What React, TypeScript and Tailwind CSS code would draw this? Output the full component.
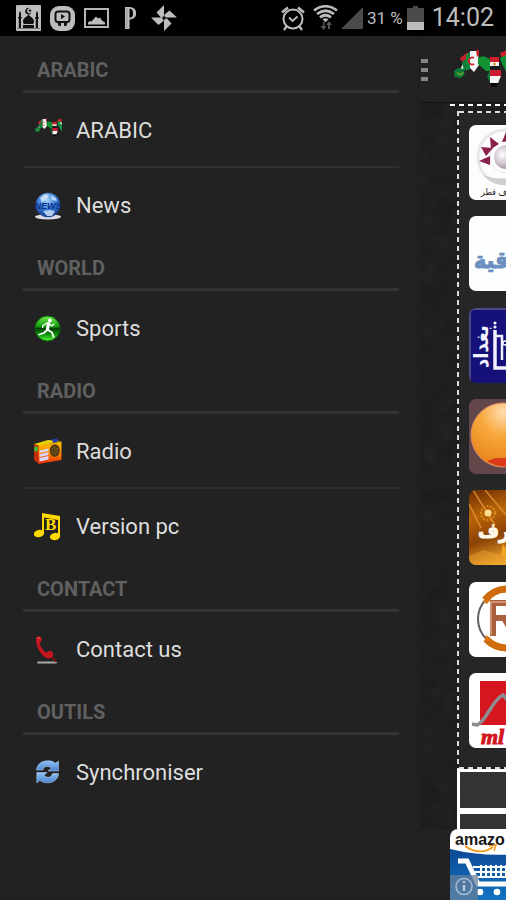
import type { ReactNode } from 'react';

/* ---------- status bar icons ---------- */
const MosqueIcon = () => (
  <svg width="25" height="26" viewBox="0 0 25 26">
    <rect width="25" height="26" rx="1" fill="#bdbdbd" />
    <g fill="#111">
      <path d="M12.5 9c.5 2.500 5.500 3.500 5.500 7.500 0 1.200-.5 2-1 2.500h-9c-.5-.5-1-1.300-1-2.500C7 12.500 12 11.500 12.500 9z" />
      <path d="M3 8l1-2 1 2v4h.700v1.500H5V23H2.800v-9.500H2V12h1zM20 8l1-2 1 2v4h.8v1.500H22V23h-2.200v-9.500H19V12h1z" />
      <path d="M7 20h11v3H7z" />
      <path d="M14 3.200a3.300 3.300 0 1 0 1.600 4.200 2.600 2.600 0 1 1-1.600-4.200z" />
      <path d="M14 4l.6 1 1.100.1-.8.8.2 1.100-1.100-.5-1 .5.200-1.100-.8-.8 1.200-.1z" />
    </g>
    <path d="M1 23.500h23" stroke="#777" />
  </svg>
);

const VideoIcon = () => (
  <svg width="25" height="25" viewBox="0 0 25 25">
    <rect width="25" height="25" rx="9" fill="#bdbdbd" />
    <rect x="5.500" y="5.500" width="14" height="10.500" rx="2.500" fill="none" stroke="#111" strokeWidth="2" />
    <path d="M11 8l4 2.600-4 2.600zM7.500 16h3.500v4h-2.500zM14 16h3.500l-1 4H14z" fill="#111" />
  </svg>
);

const PictureIcon = () => (
  <svg width="25" height="20" viewBox="0 0 25 20">
    <rect x="1" y="1" width="23" height="18" fill="none" stroke="#b5b5b5" strokeWidth="2" />
    <path d="M4 16.500v-2l2-1.500 1.500.5L12 8.500l2 2 2-1 2 3 3 2v2z" fill="#bdbdbd" />
  </svg>
);

const LetterPIcon = () => (
  <svg width="11" height="22" viewBox="0 0 11 22">
    <path
      d="M0 0h5a6 6 0 0 1 0 12.500H4.500V22H0zM4.500 1.700v9C7.300 10.700 8 9 8 6.200S7 1.700 4.500 1.700z"
      fillRule="evenodd"
      fill="#bdbdbd"
    />
    <path d="M1.800 1.500v20" stroke="#808080" strokeWidth=".7" />
  </svg>
);

const PinwheelIcon = () => (
  <svg width="26" height="26" viewBox="0 0 26 26" fill="#bdbdbd">
    <path d="M13 0v12.500H10L5.500 7.500zM26 12.500H13.500V9.500l5-4zM13 26V13.500h3l4.500 5zM0 12.500h12.500v3.500l-5 4z" />
    <circle cx="13" cy="13" r="1.800" fill="#111" />
  </svg>
);

const AlarmIcon = () => (
  <svg width="24" height="26" viewBox="0 0 24 26" fill="none" stroke="#bdbdbd">
    <circle cx="12" cy="14" r="9.500" strokeWidth="2" />
    <path d="M1 7.500L7 2.500M23 7.500l-6-5" strokeWidth="2.500" />
    <path d="M8 12.500l3.500 3.500 5-4.500" strokeWidth="1.800" />
    <path d="M5.500 21.500L3 25M18.500 21.500L21 25" strokeWidth="2.200" />
  </svg>
);

const WifiIcon = () => (
  <svg width="25" height="26" viewBox="0 0 25 26" fill="none" stroke="#bdbdbd">
    <path d="M1 5.500c7-5.700 16-5.700 23 0M4 9c5.500-4.200 11.500-4.200 17 0M7 12.300c3.500-2.600 7.500-2.600 11 0" strokeWidth="2.700" />
    <path d="M9.500 14.300c2-1.300 4-1.300 6 0l-3 3z" fill="#bdbdbd" stroke="none" />
    <path d="M10 17v4H7.500L10.500 25l3-4H11.500v-4zM15 24v-4h-2l3-4 3 4h-2v4z" fill="#555" stroke="none" />
  </svg>
);

const SignalIcon = () => (
  <svg width="22" height="22" viewBox="0 0 22 22">
    <path d="M22 0v22H0z" fill="#4b4b4b" />
  </svg>
);

const BatteryIcon = () => (
  <svg width="17" height="24" viewBox="0 0 17 24">
    <path d="M0 2h6V0h5v2h6v22H0z" fill="#4b4b4b" />
    <path d="M0 16h17v8H0z" fill="#bdbdbd" />
  </svg>
);

/* ---------- drawer icons ---------- */
const ArabMap = ({ className, box = '0 0 64 44' }: { className: string; box?: string }) => (
  <svg className={className} viewBox={box}>
    <path d="M1 27l6-9 3-7 6-7-1 8-4 3-2 7z" fill="#e9e9e9" />
    <path d="M6 8l8-6v7l-6 3z" fill="#c8202c" />
    <path d="M0 21l4-3 6 1 .5 6-4 3-6-1z" fill="#0c7a35" />
    <path d="M3.500 22.500c1 2.500 4.500 2.500 5.500 0" stroke="#e6c830" fill="none" />
    <path d="M8 12l6-5v11l-4 3z" fill="#0c7a35" />
    <path d="M12 5l5-4v17l-5 3z" fill="#0c8a3c" />
    <path d="M16 1h8l1 14-5 7-4-4z" fill="#f5f5f5" />
    <path d="M20 8a3.500 3.500 0 1 0 0 6" stroke="#d0202c" strokeWidth="1.600" fill="none" />
    <path d="M22 0h3v5l-2 2z" fill="#c8202c" />
    <path d="M24 8l5-2 7 3 0 12-4 0-8-7z" fill="#129233" />
    <path d="M36 7h9v5h-9z" fill="#d0202c" />
    <path d="M36 12h9v4h-9z" fill="#f3f3f3" />
    <path d="M36 16h9v3h-9z" fill="#181818" />
    <circle cx="40.500" cy="14" r="1.500" fill="#d0a030" />
    <path d="M36 20h11v6H36z" fill="#cf1b31" />
    <path d="M36 26h11l-3 7h-8z" fill="#f5f5f5" />
    <path d="M33 27l3-7v12z" fill="#0c7a35" />
    <path d="M36 33h8l-1 4h-5z" fill="#050505" />
    <path d="M46 3l7-3 4 6-8 5z" fill="#d0202c" />
    <path d="M46 8l6-3 8 7v19l-6-6-6-11z" fill="#0f8f38" />
    <path d="M52 8l5 2 0 2-5-1z" fill="#eee" />
  </svg>
);

const NewsIcon = () => (
  <svg className="size-7" viewBox="0 0 28 28">
    <defs>
      <radialGradient id="globe" cx=".45" cy=".3" r=".8">
        <stop offset="0" stopColor="#a9d4ff" />
        <stop offset=".5" stopColor="#2f76cf" />
        <stop offset="1" stopColor="#0c2b78" />
      </radialGradient>
    </defs>
    <ellipse cx="14" cy="24.800" rx="13" ry="2.700" fill="#d9dce6" />
    <circle cx="14" cy="13" r="12.200" fill="url(#globe)" />
    <path d="M6 6l5-4 4 1-2 4-5 3zM17 3l5 3 1 3-5-1zM9 19l7-1 5 1-3 5-5 0z" fill="#d6e9fb" opacity=".8" />
    <text x="14" y="16.500" textAnchor="middle" fontFamily="Liberation Sans, sans-serif" fontWeight="700" fontStyle="italic" fontSize="9" fill="#10318a">
      NEWS
    </text>
  </svg>
);

const SportsIcon = () => (
  <svg className="size-7" viewBox="0 0 28 28">
    <defs>
      <linearGradient id="turf" x1="0" y1="0" x2="0" y2="1">
        <stop offset="0" stopColor="#72ee4a" />
        <stop offset=".42" stopColor="#149a12" />
        <stop offset=".5" stopColor="#023f02" />
        <stop offset=".72" stopColor="#0b8a08" />
        <stop offset="1" stopColor="#58ff3a" />
      </linearGradient>
    </defs>
    <circle cx="13.500" cy="13.500" r="12.500" fill="url(#turf)" stroke="#0a6a0a" />
    <g stroke="#fff" fill="none" strokeLinecap="round" strokeLinejoin="round">
      <path d="M14.500 8.500l-1 6" strokeWidth="3.200" />
      <path d="M14 15l4 2.500 1.500 4.500M13 15l-3 3-5 1.500" strokeWidth="1.800" />
      <path d="M13 8l-4 2.500-.5 2M15.500 9l2.500 2 2-2" strokeWidth="1.200" />
    </g>
    <circle cx="16" cy="5.500" r="1.900" fill="#fff" />
  </svg>
);

const RadioIcon = () => (
  <svg className="size-7" viewBox="0 0 28 28">
    <defs>
      <linearGradient id="radioBody" x1="0" y1="0" x2="0" y2="1">
        <stop offset="0" stopColor="#ffc400" />
        <stop offset=".5" stopColor="#ff8a00" />
        <stop offset="1" stopColor="#e62a05" />
      </linearGradient>
    </defs>
    <path d="M0 6l14-4 13 1-22 5z" fill="#e5d000" />
    <path d="M0 6l5 2v18L0 22z" fill="#c62b08" />
    <path d="M4.500 7.500L27.500 3.500V22L4.500 26z" fill="url(#radioBody)" />
    <path d="M18 1.500l5-1 1 3-5 1.500z" fill="#233fb8" />
    <path d="M5.500 12.500l9-2v2.600l-9 2zM5.500 16.300l9-2v2.600l-9 2zM5.500 20l9-2v3.500l-9 2z" fill="#d9d4ff" />
    <ellipse cx="20.800" cy="12.500" rx="5" ry="6.300" fill="#4f3a12" />
    <path d="M17.500 10l6 4M17 13l5 3.500M19 8l5.500 4" stroke="#9a7428" strokeWidth=".8" />
    <ellipse cx="2" cy="11" rx="1.800" ry="2.800" fill="#28c840" />
  </svg>
);

const MusicIcon = () => (
  <svg className="size-7" viewBox="0 0 28 28" fill="#ffd800">
    <path d="M8 0l18 3v20h-2V7L10 4.500V20H8z" />
    <ellipse cx="5" cy="20.500" rx="5.200" ry="3.700" transform="rotate(-12 5 20.500)" />
    <ellipse cx="21" cy="23.500" rx="5.200" ry="3.700" transform="rotate(-12 21 23.500)" />
    <text x="11" y="17" fontFamily="Liberation Serif, serif" fontWeight="700" fontSize="17">
      B
    </text>
  </svg>
);

const PhoneIcon = () => (
  <svg className="size-7" viewBox="0 0 28 28">
    <path d="M4 26.500h18" stroke="#a9a9a9" strokeWidth="1.800" strokeLinecap="round" />
    <path d="M18 21l4 5" stroke="#8e0b12" strokeWidth="1.500" />
    <path
      d="M2.500 1.500C4-.5 7 0 7.500 2.500c.5 2-.5 4-2 5C6.500 11 9 14.500 12.500 17c1-2 3.500-2.500 5-1.500 2.500 1.500 2 5-.5 6.500-2.500 1.200-6 0-9-3.500C4 14 .8 6 2.500 1.500z"
      fill="#c51620"
    />
    <path d="M3.500 3c.5-1.500 2-1.500 2.700 0" stroke="#f06a6a" fill="none" />
  </svg>
);

const SyncIcon = () => (
  <svg className="size-7" viewBox="0 0 28 28">
    <defs>
      <linearGradient id="sync" x1="0" y1="0" x2="0" y2="1">
        <stop offset="0" stopColor="#8fc0f5" />
        <stop offset="1" stopColor="#4b82cc" />
      </linearGradient>
    </defs>
    <g fill="url(#sync)" stroke="#b7d6fa" strokeWidth=".5">
      <path d="M2.500 11C3 4.500 9 1.300 15 1.800c3 .2 5 1.200 6.500 2.500L24.500 2v10H14l3.500-3C14 6.500 9.500 7 9 11z" />
      <path d="M24.500 14.500c0 6-6 9.800-12 9.300-3-.3-5-1-6.500-2.500L2.800 24V13.500H13l-3 3c3.500 3 7.500 2 8.500-2z" />
    </g>
  </svg>
);

/* ---------- drawer ---------- */
type Entry = { label: string; icon: ReactNode };
const groups: { title: string; items: Entry[] }[] = [
  {
    title: 'ARABIC',
    items: [
      { label: 'ARABIC', icon: <ArabMap className="h-7 w-7" box="-2 4 58 44" /> },
      { label: 'News', icon: <NewsIcon /> },
    ],
  },
  { title: 'WORLD', items: [{ label: 'Sports', icon: <SportsIcon /> }] },
  {
    title: 'RADIO',
    items: [
      { label: 'Radio', icon: <RadioIcon /> },
      { label: 'Version pc', icon: <MusicIcon /> },
    ],
  },
  { title: 'CONTACT', items: [{ label: 'Contact us', icon: <PhoneIcon /> }] },
  { title: 'OUTILS', items: [{ label: 'Synchroniser', icon: <SyncIcon /> }] },
];

function Drawer() {
  return (
    <nav className="min-w-0 flex-1 border-r-4 border-[#202020] bg-[#222222] pr-[18px] pl-[23px] pt-[7px]">
      {groups.map((group) => (
        <section key={group.title}>
          <h2 className="flex h-[50px] items-center border-b-3 border-[#333333] pt-[7px] pl-[14px] text-[20px] leading-6 font-bold text-[#606060]">
            {group.title}
          </h2>
          <ul className="divide-y-2 divide-[#303030]">
            {group.items.map((item) => (
              <li key={item.label}>
                <button type="button" className="flex h-[73px] w-full items-center gap-[14px] pt-[2px] pl-[11px] text-left text-[22px] leading-7 text-[#dedede]">
                  {item.icon}
                  <span>{item.label}</span>
                </button>
              </li>
            ))}
          </ul>
        </section>
      ))}
    </nav>
  );
}

/* ---------- channel logos ---------- */
const arabicFont = 'DejaVu Sans Condensed, DejaVu Sans, sans-serif';

const QatarLogo = () => (
  <svg className="size-full" viewBox="0 0 75 75">
    <defs>
      <radialGradient id="pearl" cx=".35" cy=".4" r=".7">
        <stop offset="0" stopColor="#fff" />
        <stop offset=".6" stopColor="#c9bcc9" />
        <stop offset="1" stopColor="#8d8390" />
      </radialGradient>
    </defs>
    <rect width="75" height="75" fill="#fdfdfd" />
    <circle cx="36" cy="32" r="27" fill="none" stroke="#e8e8e8" strokeWidth="3" />
    <path d="M14 50c8 9 20 12 32 9l-2-7c-12 3-22 1-30-2z" fill="#cfcfcf" />
    <circle cx="37" cy="32" r="16" fill="#fff" stroke="#e4e4e4" />
    <circle cx="37" cy="32" r="12" fill="url(#pearl)" />
    <path d="M10 36l11-5v9zM12 22l12 1-7 8zM21 12l9 7-8 5zM37 7l5 9-9 1z" fill="#8b1f4b" />
    <text x="12" y="70" fontFamily={arabicFont} fontSize="9" fill="#222">ف قطر</text>
  </svg>
);

const IraqiyaLogo = () => (
  <svg className="size-full" viewBox="0 0 75 75">
    <rect width="75" height="75" fill="#fdfffe" />
    <text x="5" y="52" fontFamily={arabicFont} fontWeight="700" fontSize="23" fill="#6b8fc0" stroke="#6b8fc0">قية</text>
  </svg>
);

const BaghdadLogo = () => (
  <svg className="size-full" viewBox="0 0 75 75">
    <rect width="75" height="75" fill="#151178" />
    <path d="M1 74V5Q1 1 6 1h69" fill="none" stroke="#4b4a86" strokeWidth="2" />
    <text transform="translate(19 60) rotate(-90)" fontFamily={arabicFont} fontWeight="700" fontSize="20" fill="#f2f1ff">بغداد</text>
    <path d="M26 22v38h12" fill="none" stroke="#f2f1ff" strokeWidth="3.500" />
    <path d="M26 28h7v24" fill="none" stroke="#f2f1ff" strokeWidth="2.500" />
    <circle cx="26" cy="15" r="1.600" fill="#f2f1ff" />
    <circle cx="26" cy="19" r="1.600" fill="#f2f1ff" />
    <circle cx="36" cy="35" r="2" fill="none" stroke="#f2f1ff" strokeWidth="1.500" />
  </svg>
);

const SunLogo = () => (
  <svg className="size-full" viewBox="0 0 75 75">
    <defs>
      <radialGradient id="sun" cx=".5" cy=".15" r=".8">
        <stop offset="0" stopColor="#ffdcb0" />
        <stop offset=".45" stopColor="#f8a83c" />
        <stop offset="1" stopColor="#e8861e" />
      </radialGradient>
    </defs>
    <rect width="75" height="75" fill="#62464a" />
    <circle cx="34" cy="36" r="32" fill="url(#sun)" stroke="#d98a68" />
    <path d="M18 62l9-3 12 0v8c-8 1-15-1-21-5z" fill="#dc3a18" />
  </svg>
);

const GoldLogo = () => (
  <svg className="size-full" viewBox="0 0 75 75">
    <defs>
      <linearGradient id="gold" x1="0" y1="0" x2=".35" y2="1">
        <stop offset="0" stopColor="#6b2c02" />
        <stop offset=".35" stopColor="#b96408" />
        <stop offset=".65" stopColor="#8a4305" />
        <stop offset="1" stopColor="#f0a52a" />
      </linearGradient>
    </defs>
    <rect width="75" height="75" fill="url(#gold)" />
    <path d="M4 0l22 35M16 0l22 26M0 14l12 24" stroke="#e79a36" strokeWidth="1.500" opacity=".8" />
    <path d="M0 66l14-6 24 6v9H0z" fill="#f3ab35" opacity=".4" />
    <circle cx="19" cy="23" r="7" fill="none" stroke="#d68b18" strokeWidth="2" strokeDasharray="2 1.500" />
    <circle cx="19" cy="23" r="3.500" fill="#ffdc8a" />
    <path d="M34 54l2 4 5 0-4 4 0 5-5-3z" fill="#f4a61e" />
    <text x="9" y="48" fontFamily={arabicFont} fontWeight="700" fontSize="20" fill="#fff8e8" stroke="#fff8e8">رف</text>
  </svg>
);

const RingLogo = () => (
  <svg className="size-full" viewBox="0 0 75 75">
    <rect width="75" height="75" fill="#fff" />
    <circle cx="37" cy="37" r="28" fill="none" stroke="#626262" strokeWidth="2" />
    <path d="M16 18a29 29 0 0 1 22-11" fill="none" stroke="#cf6b0c" strokeWidth="7" />
    <path d="M17 57a29 29 0 0 0 21 9" fill="none" stroke="#cf6b0c" strokeWidth="7" />
    <path d="M13 19l9-2-4 5zM15 60l2-7 6 5z" fill="#d9760f" />
    <path d="M24 54V21h20v15H24M36 38l10 16" fill="none" stroke="#a8603d" strokeWidth="6" />
    <path d="M22 53V20h20" fill="none" stroke="#dba183" strokeWidth="1.500" />
  </svg>
);

const RedLogo = () => (
  <svg className="size-full" viewBox="0 0 75 75">
    <rect width="75" height="75" fill="#fff" />
    <rect x="11" y="8" width="60" height="44" fill="#d4161f" />
    <path d="M3 51l5 1c9-3 15-25 26-30l7 8" fill="none" stroke="#8d8d92" strokeWidth="3.500" />
    <text x="12" y="71" fontFamily="Liberation Serif, serif" fontWeight="700" fontStyle="italic" fontSize="22" fill="#d4161f" stroke="#d4161f">ml</text>
  </svg>
);

const channels: { name: string; logo: ReactNode }[] = [
  { name: 'Qatar', logo: <QatarLogo /> },
  { name: 'Al Iraqiya', logo: <IraqiyaLogo /> },
  { name: 'Baghdad', logo: <BaghdadLogo /> },
  { name: 'Sunrise', logo: <SunLogo /> },
  { name: 'Gold', logo: <GoldLogo /> },
  { name: 'Ring', logo: <RingLogo /> },
  { name: 'Red', logo: <RedLogo /> },
];

const AdBanner = () => (
  <svg className="h-[71px] w-[75px] shrink-0" viewBox="0 0 75 71">
    <defs>
      <linearGradient id="ad" x1="0" y1="0" x2="0" y2="1">
        <stop offset="0" stopColor="#0b3a86" />
        <stop offset="1" stopColor="#1173c0" />
      </linearGradient>
      <clipPath id="adShape">
        <path d="M0 71V9Q0 0 9 0h66v71z" />
      </clipPath>
    </defs>
    <g clipPath="url(#adShape)">
      <rect width="75" height="71" fill="url(#ad)" />
      <path d="M0 0h75v24Q37 29 0 20z" fill="#fff" />
      <text x="5" y="16" fontFamily="Liberation Sans, sans-serif" fontWeight="700" fontSize="16" fill="#161616">amazo</text>
      <path d="M15 17c9 7 20 7 28 1" fill="none" stroke="#f59a1c" strokeWidth="1.800" />
      <path d="M39 17l7-1-2 6" fill="none" stroke="#f59a1c" strokeWidth="1.500" />
      <path d="M8 32h9l11 23h32" fill="none" stroke="#fff" strokeWidth="5" />
      <path d="M23 38h37M25 43h35M27 48h33M31 36v13M36 36v13M41 36v13M46 36v13M51 36v13M56 36v13" stroke="#fff" strokeWidth="2" />
      <circle cx="30" cy="63" r="3.300" fill="#fff" />
      <circle cx="47" cy="63" r="3.300" fill="#fff" />
      <rect y="46" width="28" height="25" fill="#6a7f99" opacity=".72" />
      <circle cx="14" cy="57.500" r="8" fill="none" stroke="#a9bdd2" strokeWidth="1.500" />
      <path d="M14 56v6M14 52v2" stroke="#b9cadb" strokeWidth="2.400" />
    </g>
  </svg>
);

/* ---------- main page, pushed to the side by the open drawer ---------- */
function Page() {
  return (
    <main className="flex w-[85px] shrink-0 flex-col overflow-hidden bg-[#1b1b1b]">
      <header className="flex h-[67px] shrink-0 items-center border-b border-[#151515] bg-[#222222] pt-[2px]">
        <button type="button" aria-label="Menu" className="flex w-[7px] shrink-0 flex-col gap-[5px]">
          <span className="h-1 bg-[#858585]" />
          <span className="h-1 bg-[#858585]" />
          <span className="h-1 bg-[#858585]" />
        </button>
        <ArabMap className="ml-[26px] h-[40px] w-[64px] shrink-0" box="0 0 64 40" />
      </header>

      <div className="relative flex flex-col pt-px">
        <svg className="absolute inset-0 size-full opacity-5" aria-hidden="true">
          <filter id="grain">
            <feTurbulence type="fractalNoise" baseFrequency=".06" numOctaves="3" />
            <feColorMatrix type="saturate" values="0" />
          </filter>
          <rect width="100%" height="100%" filter="url(#grain)" />
        </svg>
        <div className="relative ml-[29px] h-[2px] bg-[repeating-linear-gradient(90deg,#ffffff_0_5px,#1b1b1b_5px_9px)]" />
        <div className="relative mt-[5px] ml-[36px] flex bg-[#262626]">
          <div className="w-[2px] shrink-0 bg-[repeating-linear-gradient(180deg,#dddddd_0_5px,#1b1b1b_5px_9px)]" />
          <div className="flex min-w-0 flex-1 flex-col">
            <div className="h-[2px] bg-[repeating-linear-gradient(90deg,#dddddd_0_5px,#1b1b1b_5px_9px)]" />
            <ul className="flex h-[654px] flex-col justify-between overflow-hidden pt-[12px] pb-[19px] pl-[10px]">
              {channels.map((channel) => (
                <li key={channel.name} className="h-[75px] w-[75px] shrink-0">
                  <button type="button" aria-label={channel.name} className="size-full overflow-hidden rounded-[7px]">
                    {channel.logo}
                  </button>
                </li>
              ))}
            </ul>
            <div className="h-[2px] bg-[repeating-linear-gradient(90deg,#dddddd_0_5px,#1b1b1b_5px_9px)]" />
          </div>
        </div>
        <div className="relative ml-[36px] flex flex-col gap-[6px] border-t-3 border-l-3 border-white bg-white">
          <div className="h-[36px] bg-[#333333]" />
          <div className="h-[15px] bg-[#333333]" />
        </div>
      </div>

      <footer className="flex flex-1 items-end bg-[#222222] pl-[29px]">
        <AdBanner />
      </footer>
    </main>
  );
}

export default function App() {
  return (
    <div className="flex min-h-screen flex-col overflow-hidden bg-[#222222] font-['Roboto',sans-serif]">
      <header className="flex h-9 shrink-0 items-center justify-between bg-black pr-[12px] pl-4 text-[#bdbdbd]">
        <div className="flex items-center gap-[9px]">
          <MosqueIcon />
          <VideoIcon />
          <PictureIcon />
          <div className="flex w-6 justify-center">
            <LetterPIcon />
          </div>
          <PinwheelIcon />
        </div>
        <div className="flex items-center">
          <AlarmIcon />
          <div className="ml-2">
            <WifiIcon />
          </div>
          <div className="ml-[3px]">
            <SignalIcon />
          </div>
          <span className="ml-1 text-[17px] leading-6 whitespace-nowrap">31 %</span>
          <div className="ml-1">
            <BatteryIcon />
          </div>
          <time className="ml-[8px] text-[25px] leading-8">14:02</time>
        </div>
      </header>
      <div className="flex flex-1">
        <Drawer />
        <Page />
      </div>
    </div>
  );
}
